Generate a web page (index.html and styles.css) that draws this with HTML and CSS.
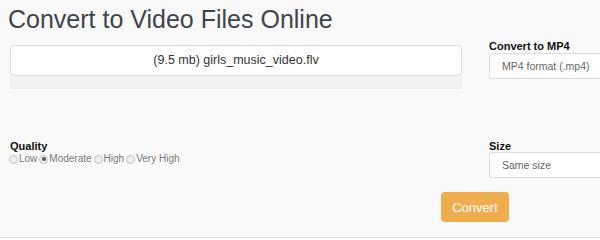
FILE: index.html
```html
<!DOCTYPE html>
<html lang="en">
<head>
    <meta charset="UTF-8">
    <title>Convert to Video Files Online</title>
    <link rel="stylesheet" href="styles.css">
</head>
<body>
    <div class="page">
        <h1 class="title">Convert to Video Files Online</h1>
        <div class="row row-top">
            <div class="col-left">
                <div class="file">(9.5 mb) girls_music_video.flv</div>
                <div class="progress"></div>
            </div>
            <div class="col-right">
                <label class="label">Convert to MP4</label>
                <div class="select">MP4 format (.mp4)</div>
            </div>
        </div>
        <div class="row row-opts">
            <div class="col-left">
                <label class="label">Quality</label>
                <div class="radios">
                    <span class="opt"><span class="radio"></span>Low</span>
                    <span class="opt"><span class="radio checked"></span>Moderate</span>
                    <span class="opt"><span class="radio"></span>High</span>
                    <span class="opt"><span class="radio"></span>Very High</span>
                </div>
            </div>
            <div class="col-right">
                <label class="label">Size</label>
                <div class="select">Same size</div>
            </div>
        </div>
        <div class="actions">
            <button class="btn">Convert</button>
        </div>
    </div>
    <div class="footer"></div>
</body>
</html>
```

FILE: styles.css
```css
body{margin:0;padding:0;}
body{
    background-color: #f9f9f9;
    font-family: "Liberation Sans", Arial, sans-serif;
    color: #333;
}
.title{
    margin: 0;
    padding-left: 8px;
    height: 38px;
    font-size: 25px;
    line-height: 38px;
    font-weight: normal;
    color: #3f444c;
    white-space: nowrap;
}
.row{
    display: flex;
    gap: 27px;
    padding-left: 10px;
}
.row-top{
    margin-top: 2px;
}
.row-opts{
    margin-top: 51px;
}
.col-left{
    flex: 0 0 452px;
}
.col-right{
    flex: 1;
    min-width: 0;
}
.file{
    margin-top: 5px;
    height: 29px;
    line-height: 29px;
    border: 1px solid #dcdcdc;
    border-radius: 4px;
    background-color: #fff;
    box-shadow: 0 1px 1px rgba(0,0,0,.04);
    text-align: center;
    font-size: 12.5px;
    color: #333;
}
.progress{
    height: 13px;
    background-color: #f1f1f1;
    border-radius: 0 0 3px 3px;
}
.label{
    display: block;
    height: 12px;
    line-height: 12px;
    font-size: 11px;
    font-weight: bold;
    color: #111;
}
.row-top .label{
    height: 13px;
    line-height: 13px;
}
.select{
    box-sizing: border-box;
    height: 26px;
    line-height: 24px;
    padding-left: 12px;
    border: 1px solid #ddd;
    border-right: none;
    border-radius: 3px 0 0 3px;
    background-color: #fff;
    font-size: 10.5px;
    color: #666;
    white-space: nowrap;
    overflow: hidden;
}
.radios{
    display: flex;
    gap: 2px;
    margin-left: -1px;
    height: 14px;
    line-height: 14px;
    font-size: 10px;
    color: #7a7a7a;
    white-space: nowrap;
}
.opt{
    display: flex;
    align-items: center;
    gap: 1px;
}
.radio{
    box-sizing: border-box;
    width: 9px;
    height: 9px;
    border: 1px solid #c3c3c3;
    border-radius: 50%;
    background-color: #eee;
    position: relative;
}
.radio.checked::after{
    content: "";
    position: absolute;
    left: 1.5px;
    top: 1.5px;
    width: 4px;
    height: 4px;
    border-radius: 50%;
    background-color: #555;
}
.actions{
    margin-top: 14px;
    padding-left: 441px;
}
.btn{
    width: 68px;
    height: 30px;
    border: none;
    border-radius: 4px;
    background-color: #f0ad4e;
    color: #fff;
    font-family: "Liberation Sans", Arial, sans-serif;
    font-size: 13px;
    cursor: pointer;
}
.footer{
    margin-top: 15px;
    height: 2px;
    border-top: 1px solid #e3e3e3;
    background-color: #fff;
}
```
